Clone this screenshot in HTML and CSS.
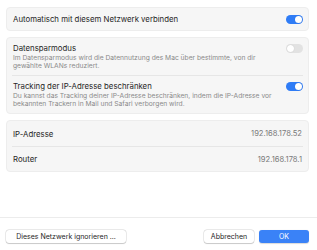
FILE: index.html
```html
<!DOCTYPE html>
<html lang="de">
<head>
<meta charset="utf-8">
<link rel="stylesheet" href="styles.css">
</head>
<body>
<div class="window">
  <div class="content">
    <div class="card">
      <div class="row row-single">
        <span class="title">Automatisch mit diesem Netzwerk verbinden</span>
        <span class="toggle on"><span class="knob"></span></span>
      </div>
    </div>
    <div class="card">
      <div class="row row-desc">
        <div class="text">
          <div class="title">Datensparmodus</div>
          <div class="desc">Im Datensparmodus wird die Datennutzung des Mac über bestimmte, von dir gewählte WLANs reduziert.</div>
        </div>
        <span class="toggle off"><span class="knob"></span></span>
      </div>
      <div class="row row-desc">
        <div class="text">
          <div class="title">Tracking der IP-Adresse beschränken</div>
          <div class="desc">Du kannst das Tracking deiner IP-Adresse beschränken, indem die IP-Adresse vor bekannten Trackern in Mail und Safari verborgen wird.</div>
        </div>
        <span class="toggle on"><span class="knob"></span></span>
      </div>
    </div>
    <div class="card">
      <div class="row row-info">
        <span class="title">IP-Adresse</span>
        <span class="value">192.168.178.52</span>
      </div>
      <div class="row row-info">
        <span class="title">Router</span>
        <span class="value">192.168.178.1</span>
      </div>
    </div>
  </div>
  <div class="footer">
    <button class="btn btn-wide">Dieses Netzwerk ignorieren ...</button>
    <div class="spacer"></div>
    <button class="btn btn-cancel">Abbrechen</button>
    <button class="btn btn-ok">OK</button>
  </div>
</div>
</body>
</html>
```
FILE: styles.css
```css
html, body {
  margin: 0;
  padding: 0;
  background: #ffffff;
}
body {
  font-family: Inter, "Liberation Sans", sans-serif;
  color: #262626;
}
.window {
  width: 317px;
  height: 250px;
  display: flex;
  flex-direction: column;
  box-sizing: border-box;
}
.content {
  padding: 7px 8px 0 6px;
  display: flex;
  flex-direction: column;
  gap: 6px;
}
.card {
  background: #f6f6f6;
  border: 1px solid #ededed;
  border-radius: 4px;
  padding: 0 5px;
}
.row {
  display: flex;
  align-items: flex-start;
  justify-content: space-between;
  box-sizing: border-box;
}
.row + .row {
  border-top: 1px solid #e6e6e6;
}
.row-single {
  height: 22px;
  align-items: center;
}
.row-info {
  height: 25px;
  align-items: center;
}
.row-desc {
  padding: 5px 0 5px;
}
.title {
  font-size: 7.8px;
  line-height: 10px;
  padding-left: 1px;
}
.desc {
  font-size: 6.7px;
  line-height: 8px;
  color: #8a8a8a;
  padding-left: 1px;
  margin-top: 1px;
  width: 272px;
}
.value {
  font-size: 7.6px;
  color: #7a7a7a;
  padding-right: 1px;
}
.toggle {
  width: 17px;
  height: 9px;
  border-radius: 5px;
  display: flex;
  align-items: center;
  padding: 0 1px;
  box-sizing: border-box;
  flex-shrink: 0;
}
.row-desc .toggle {
  margin-top: 1px;
}
.toggle.on {
  background: #2f7cf6;
  justify-content: flex-end;
}
.toggle.off {
  background: #e2e2e2;
  justify-content: flex-start;
}
.knob {
  width: 7px;
  height: 7px;
  border-radius: 50%;
  background: #ffffff;
  box-shadow: 0 0 1px rgba(0,0,0,0.2);
}
.footer {
  margin-top: auto;
  border-top: 1px solid #ececec;
  height: 33px;
  box-sizing: border-box;
  display: flex;
  align-items: center;
  padding: 4px 8px 0 6px;
  gap: 5px;
}
.spacer {
  flex: 1;
}
.btn {
  font-family: Inter, "Liberation Sans", sans-serif;
  font-size: 7px;
  height: 13px;
  border-radius: 3px;
  border: none;
  padding: 0;
  margin: 0;
  background: #ffffff;
  color: #262626;
  box-shadow: 0 0 0 0.5px rgba(0,0,0,0.15), 0 0.5px 1px rgba(0,0,0,0.15);
}
.btn-wide {
  width: 120px;
}
.btn-cancel {
  width: 50px;
}
.btn-ok {
  width: 50px;
  background: #3a82f7;
  color: #ffffff;
  box-shadow: 0 0.5px 1px rgba(0,0,0,0.15);
}
```
